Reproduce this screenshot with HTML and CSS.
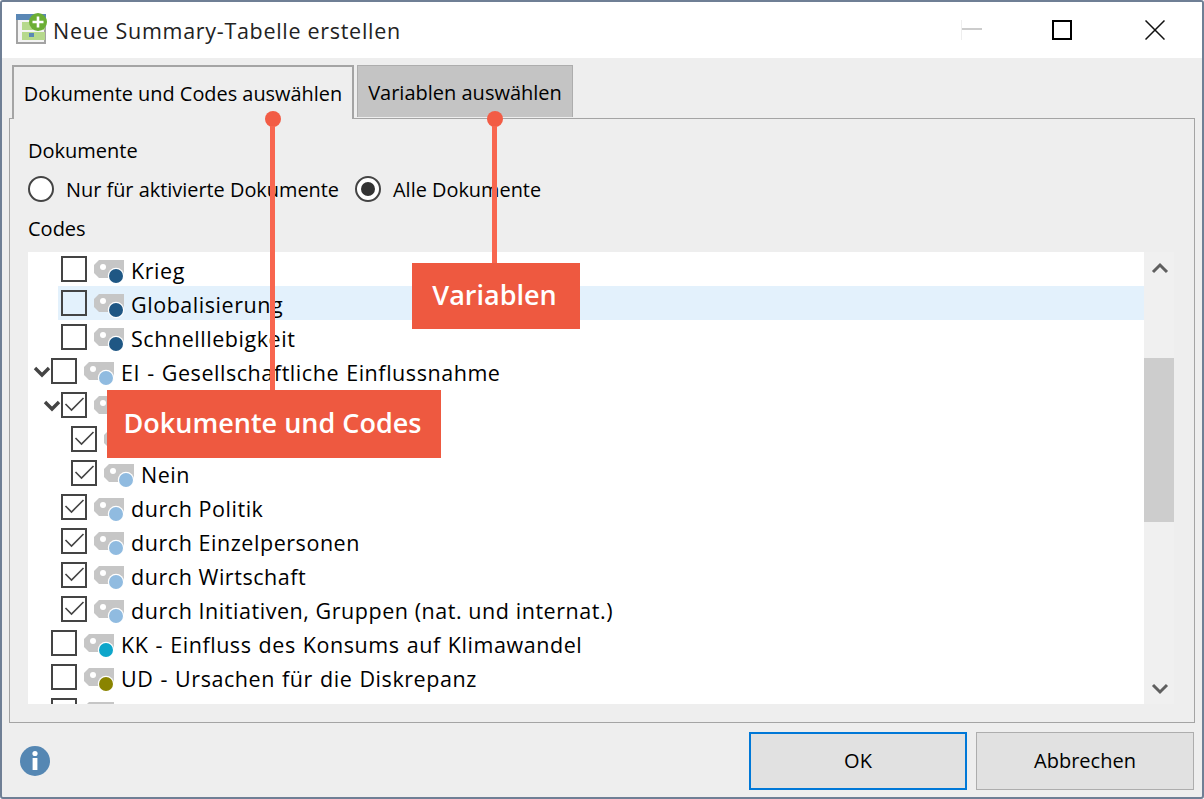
FILE: index.html
```html
<!DOCTYPE html>
<html lang="de">
<head>
<meta charset="utf-8">
<title>Neue Summary-Tabelle erstellen</title>
<link rel="stylesheet" href="styles.css">
</head>
<body>
<svg class="defs" width="0" height="0" aria-hidden="true">
  <symbol id="tag" viewBox="0 0 32 28">
    <path d="M6 1H31V19H6L1 14V6Z" fill="#c6c6c6"/>
    <circle cx="10" cy="8" r="3" fill="#fff"/>
    <circle cx="23" cy="17" r="8.2" fill="#fff"/>
    <circle cx="23" cy="17" r="7" fill="currentColor"/>
  </symbol>
  <symbol id="chev" viewBox="0 0 18 14">
    <path d="M2 3L9 10L16 3" fill="none" stroke="#444" stroke-width="3.4"/>
  </symbol>
  <symbol id="tick" viewBox="0 0 22 22">
    <path d="M2.5 10L8.5 16L20.5 4" fill="none" stroke="#444" stroke-width="1.6"/>
  </symbol>
</svg>
<div class="window">
  <header class="titlebar">
    <svg class="appicon" width="32" height="32" viewBox="0 0 32 32">
      <rect x="1" y="2" width="28" height="28" fill="#f4f4f4" stroke="#a3a3a3" stroke-width="2"/>
      <rect x="0" y="1" width="30" height="6" fill="#5a87b5"/>
      <rect x="6" y="9" width="23" height="8" fill="#b6d98c"/>
      <rect x="6" y="19" width="23" height="8" fill="#b6d98c"/>
      <rect x="13" y="20" width="5" height="4" fill="#5a87b5"/>
      <circle cx="22" cy="9" r="9" fill="#6cae34"/>
      <path d="M22 3.5V14.5M16.5 9H27.5" stroke="#fff" stroke-width="2.6"/>
    </svg>
    <span class="title">Neue Summary-Tabelle erstellen</span>
    <div class="controls">
      <span class="ctl ctl-min"></span>
      <span class="ctl ctl-max"></span>
      <svg class="ctl-close" width="20" height="20" viewBox="0 0 20 20"><path d="M0.5 0.5L19.5 19.5M19.5 0.5L0.5 19.5" stroke="#111" stroke-width="1.5"/></svg>
    </div>
  </header>
  <main class="content">
    <div class="tabs">
      <div class="tab tab-active">Dokumente und Codes auswählen</div>
      <div class="tab tab-idle">Variablen auswählen</div>
    </div>
    <section class="panel">
      <div class="label">Dokumente</div>
      <div class="radios">
        <label class="radio"><span class="dot"></span>Nur für aktivierte Dokumente</label>
        <label class="radio"><span class="dot dot-on"></span>Alle Dokumente</label>
      </div>
      <div class="label label-codes">Codes</div>
      <div class="treewrap">
        <div class="tree">
          <div class="row lv2"><span class="box"></span><svg class="tag c-navy"><use href="#tag"/></svg><span class="txt">Krieg</span></div>
          <div class="row lv2 hl"><span class="box"></span><svg class="tag c-navy"><use href="#tag"/></svg><span class="txt">Globalisierung</span></div>
          <div class="row lv2"><span class="box"></span><svg class="tag c-navy"><use href="#tag"/></svg><span class="txt">Schnelllebigkeit</span></div>
          <div class="row lv1"><svg class="chev"><use href="#chev"/></svg><span class="box"></span><svg class="tag c-sky"><use href="#tag"/></svg><span class="txt txt-code">EI - Gesellschaftliche Einflussnahme</span></div>
          <div class="row lv2"><svg class="chev"><use href="#chev"/></svg><span class="box"><svg class="tick"><use href="#tick"/></svg></span><svg class="tag c-sky"><use href="#tag"/></svg></div>
          <div class="row lv3"><span class="box"><svg class="tick"><use href="#tick"/></svg></span><svg class="tag c-sky"><use href="#tag"/></svg></div>
          <div class="row lv3"><span class="box"><svg class="tick"><use href="#tick"/></svg></span><svg class="tag c-sky"><use href="#tag"/></svg><span class="txt">Nein</span></div>
          <div class="row lv2"><span class="box"><svg class="tick"><use href="#tick"/></svg></span><svg class="tag c-sky"><use href="#tag"/></svg><span class="txt">durch Politik</span></div>
          <div class="row lv2"><span class="box"><svg class="tick"><use href="#tick"/></svg></span><svg class="tag c-sky"><use href="#tag"/></svg><span class="txt">durch Einzelpersonen</span></div>
          <div class="row lv2"><span class="box"><svg class="tick"><use href="#tick"/></svg></span><svg class="tag c-sky"><use href="#tag"/></svg><span class="txt">durch Wirtschaft</span></div>
          <div class="row lv2"><span class="box"><svg class="tick"><use href="#tick"/></svg></span><svg class="tag c-sky"><use href="#tag"/></svg><span class="txt">durch Initiativen, Gruppen (nat. und internat.)</span></div>
          <div class="row lv1"><span class="box"></span><svg class="tag c-teal"><use href="#tag"/></svg><span class="txt txt-code">KK - Einfluss des Konsums auf Klimawandel</span></div>
          <div class="row lv1"><span class="box"></span><svg class="tag c-olive"><use href="#tag"/></svg><span class="txt txt-code">UD - Ursachen für die Diskrepanz</span></div>
          <div class="row lv1"><span class="box"></span><svg class="tag c-grey"><use href="#tag"/></svg></div>
        </div>
        <div class="scrollbar">
          <svg class="arrow" width="18" height="12" viewBox="0 0 18 12"><path d="M2 10L9 3L16 10" fill="none" stroke="#5f5f5f" stroke-width="3"/></svg>
          <div class="track"><div class="thumb"></div></div>
          <svg class="arrow" width="18" height="12" viewBox="0 0 18 12"><path d="M2 2L9 9L16 2" fill="none" stroke="#5f5f5f" stroke-width="3"/></svg>
        </div>
      </div>
    </section>
    <footer class="footer">
      <svg class="info" width="32" height="32" viewBox="0 0 32 32">
        <circle cx="16" cy="16" r="15" fill="#5587b3"/>
        <circle cx="16" cy="8.5" r="2.6" fill="#fff"/>
        <rect x="13.6" y="13" width="4.8" height="12" fill="#fff"/>
      </svg>
      <div class="buttons">
        <button class="btn btn-default">OK</button>
        <button class="btn">Abbrechen</button>
      </div>
    </footer>
  </main>
  <div class="callout callout-codes">
    <span class="pin"></span>
    <span class="stem"></span>
    <span class="flag">Dokumente und Codes</span>
  </div>
  <div class="callout callout-vars">
    <span class="pin"></span>
    <span class="stem"></span>
    <span class="flag">Variablen</span>
  </div>
</div>
</body>
</html>
```
FILE: styles.css
```css
* { box-sizing: border-box; }
html, body { margin: 0; height: 100%; }
body { font-family: "Open Sans", "Liberation Sans", sans-serif; font-size: 20px; color: #000; background: #fff; overflow: hidden; }
.defs { position: absolute; }
.window { position: relative; width: 1204px; height: 799px; border: 2px solid #6f7f95; border-radius: 3px; display: flex; flex-direction: column; background: #eee; overflow: hidden; }
.titlebar { height: 56px; flex: none; background: #fff; display: flex; align-items: center; padding-left: 14px; }
.appicon { margin-right: 5px; margin-top: -2px; flex: none; }
.title { font-size: 21.5px; letter-spacing: 0.7px; color: #222; }
.controls { margin-left: auto; display: flex; align-items: center; padding-right: 37px; }
.ctl-min { width: 21px; height: 20px; border-left: 1px solid #eee; position: relative; margin-right: 70px; }
.ctl-min::after { content: ""; position: absolute; left: 0; right: 0; top: 8px; height: 2px; background: #ccc; }
.ctl-max { width: 20px; height: 20px; border: 2px solid #000; margin-right: 73px; }
.content { flex: 1; display: flex; flex-direction: column; padding: 7px 7px 0; min-height: 0; }
.tabs { display: flex; height: 53px; flex: none; padding-left: 3px; align-items: flex-start; position: relative; z-index: 1; }
.tab { display: flex; align-items: center; justify-content: center; }
.tab-active { width: 342px; height: 54px; background: #eee; border: 2px solid #a4a4a4; border-bottom: 0; padding-top: 1px; font-size: 19.9px; }
.tab-idle { width: 216px; height: 52px; margin-left: 3px; padding-top: 2px; background: #c4c4c4; border: 1px solid #adadad; border-bottom: 0; }
.panel { flex: none; height: 605px; border: 1px solid #a4a4a4; padding: 18px 20px 0 18px; }
.label { line-height: 28px; height: 28px; }
.label-codes { margin-top: 12px; }
.radios { display: flex; margin-top: 10px; height: 28px; gap: 16px; font-size: 19.9px; }
.radio { display: flex; align-items: center; }
.dot { width: 26px; height: 26px; border-radius: 50%; border: 2px solid #444; background: #fff; margin-right: 12px; position: relative; flex: none; }
.dot-on::after { content: ""; position: absolute; left: 4px; top: 4px; width: 14px; height: 14px; border-radius: 50%; background: #333; }
.treewrap { display: flex; height: 452px; margin-top: 9px; }
.tree { flex: 1; background: #fff; overflow: hidden; }
.row { height: 34px; display: flex; align-items: center; position: relative; white-space: nowrap; }
.lv1 { padding-left: 23px; }
.lv2 { padding-left: 33px; }
.lv3 { padding-left: 43px; }
.hl { background: linear-gradient(#e3f1fc, #e3f1fc) 30px 0 / 100% 100% no-repeat; }
.txt { font-size: 21.5px; letter-spacing: 0.55px; margin-top: 2px; }
.txt-code { word-spacing: 1px; }
.box { width: 26px; height: 26px; border: 2px solid #444; background: transparent; flex: none; display: block; }
.tick { width: 22px; height: 22px; display: block; }
.tag { width: 32px; height: 28px; flex: none; margin: 8px 6px 0 6px; }
.c-navy { color: #1f5784; }
.c-sky { color: #90bbe0; }
.c-teal { color: #0ea6ca; }
.c-olive { color: #8a8400; }
.c-grey { color: #c6c6c6; }
.chev { position: absolute; width: 18px; height: 14px; margin-left: -18px; margin-top: 1px; }
.scrollbar { width: 30px; flex: none; background: #f0f0f0; display: flex; flex-direction: column; align-items: center; justify-content: space-between; padding: 10px 0 9px; }
.arrow { margin-left: 2px; flex: none; }
.track { flex: 1; width: 100%; padding-top: 84px; }
.thumb { height: 164px; background: #cdcdcd; }
.footer { flex: 1; display: flex; align-items: center; justify-content: space-between; padding: 2px 1px 0 10px; }
.buttons { display: flex; gap: 9px; }
.btn { width: 218px; height: 58px; background: #e1e1e1; border: 1px solid #adadad; font: inherit; color: #000; padding: 0 0 2px; }
.btn-default { border: 2px solid #0078d7; }
.callout { position: absolute; z-index: 2; display: flex; flex-direction: column; align-items: flex-start; }
.callout-codes { left: 105px; top: 109px; width: 334px; }
.callout-vars { left: 410px; top: 109px; width: 168px; }
.pin { width: 16px; height: 16px; border-radius: 50%; background: #f25c45; flex: none; }
.stem { width: 5px; background: #f8664f; flex: none; margin-top: -1px; }
.callout-codes .pin { margin-left: 158px; }
.callout-codes .stem { margin-left: 163px; height: 264px; }
.callout-vars .pin { margin-left: 75px; }
.callout-vars .stem { margin-left: 80px; height: 137px; }
.flag { width: 100%; background: #ee5940; color: #fff; font-weight: 600; font-size: 27px; text-align: center; padding-right: 3px; }
.callout-codes .flag { height: 68px; line-height: 66px; }
.callout-vars .flag { height: 66px; line-height: 64px; }
```
